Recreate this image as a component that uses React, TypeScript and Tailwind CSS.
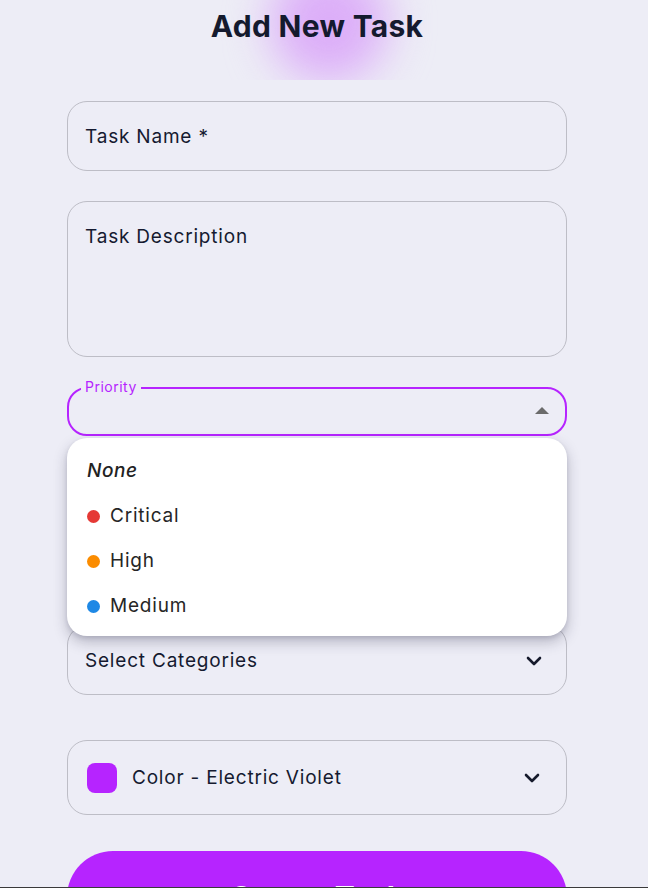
import React from "react";

function Chevron() {
  return (
    <svg width="16" height="10" viewBox="0 0 16 10" fill="none">
      <polyline points="2,2 8,8 14,2" stroke="#161a2c" strokeWidth="2.6" strokeLinecap="round" strokeLinejoin="round" />
    </svg>
  );
}

export default function App() {
  const items = [
    { label: "Critical", color: "bg-[#e53935]" },
    { label: "High", color: "bg-[#fb8c00]" },
    { label: "Medium", color: "bg-[#1e88e5]" },
  ];
  return (
    <div className="min-h-screen bg-[#ededf6] relative overflow-hidden font-['Inter',sans-serif] text-[#151a30]">
      <div className="w-[634px]">
        <div className="relative h-[81px]">
          <div className="absolute left-[210px] top-0 w-[240px] h-[80px] overflow-hidden">
            <div className="absolute left-[60px] top-[-36px] w-[118px] h-[118px] rounded-full bg-[#dcaef8] blur-[22px]" />
          </div>
          <h1 className="relative pt-[7px] text-center text-[30px] leading-[38px] font-bold tracking-[0.3px] text-[#141a2e]">
            Add New Task
          </h1>
        </div>

        <div className="mx-auto mt-[20px] w-[500px] flex flex-col">
          <div className="h-[70px] rounded-[20px] border border-[#bdbdc6] flex items-center px-[17px] pt-[2px] text-[19px] tracking-[0.8px]">
            Task Name *
          </div>

          <div className="mt-[30px] h-[156px] rounded-[20px] border border-[#bdbdc6] px-[17px] pt-[21px] text-[19px] tracking-[0.8px]">
            Task Description
          </div>

          <div className="relative mt-[30px]">
            <div className="relative h-[49px] rounded-[20px] border-2 border-[#b624ff] flex items-center justify-end pr-[16px]">
              <span className="absolute -top-[10px] left-[12px] px-[4px] bg-[#ededf6] text-[14px] leading-[16px] tracking-[0.5px] text-[#b624ff]">
                Priority
              </span>
              <svg width="14" height="7" viewBox="0 0 14 7" className="mt-[-2px]">
                <polygon points="0,7 7,0 14,7" fill="#6b6b6b" />
              </svg>
            </div>
            <div className="absolute z-20 top-[51px] left-0 w-[500px] rounded-[20px] bg-white pt-[11px] pb-[7px] shadow-[0_6px_14px_rgba(40,40,70,0.28),0_2px_4px_rgba(40,40,70,0.12)]">
              <div className="h-[45px] flex items-center px-[20px] text-[19px] tracking-[0.6px] italic font-medium text-[#222]">
                None
              </div>
              {items.map((it) => (
                <div key={it.label} className="h-[45px] flex items-center px-[20px] text-[19px] tracking-[0.8px] text-[#262626]">
                  <span className={`w-[13px] h-[13px] rounded-full ${it.color}`} />
                  <span className="ml-[10px]">{it.label}</span>
                </div>
              ))}
            </div>
          </div>

          <div className="mt-[30px] h-[130px] rounded-[20px] border border-[#bdbdc6]" />

          <div className="mt-[29px] h-[70px] rounded-[20px] border border-[#bdbdc6] flex items-center justify-between px-[17px] pr-[24px] pt-[2px] text-[19px] tracking-[0.8px]">
            <span>Select Categories</span>
            <Chevron />
          </div>

          <div className="mt-[45px] h-[75px] rounded-[20px] border border-[#bdbdc6] flex items-center px-[19px] pr-[26px] text-[19px] tracking-[0.8px]">
            <span className="w-[30px] h-[30px] rounded-[8px] bg-[#b624ff]" />
            <span className="ml-[15px] flex-1 pt-[2px]">Color - Electric Violet</span>
            <Chevron />
          </div>

          <button className="mt-[36px] h-[92px] rounded-full bg-[#b624ff] text-white text-[30px] font-bold">
            Create Task
          </button>
        </div>
      </div>

      <div className="fixed bottom-0 left-0 right-0 h-px bg-[#3a3a3a]" />
    </div>
  );
}
